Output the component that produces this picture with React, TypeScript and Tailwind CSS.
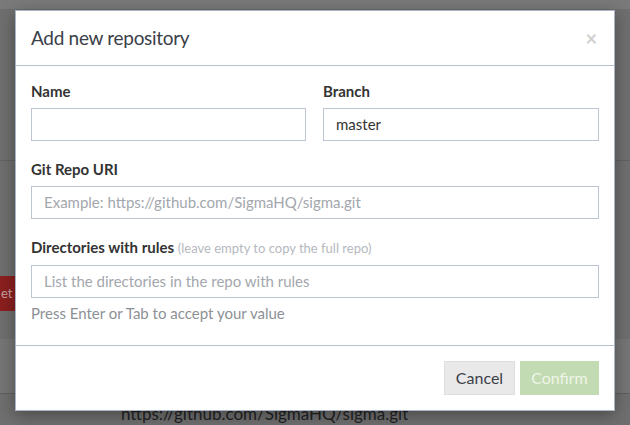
import React from 'react';

const font = { fontFamily: 'Lato, "Noto Sans", sans-serif' };

const Field: React.FC<{ placeholder?: string; value?: string }> = ({ placeholder, value }) => (
    <div className="h-[33px] border border-[#bcc5d1] px-[12px] flex items-center text-[15px]">
        {value ? <span className="text-[#333]">{value}</span> : <span className="text-[#a3a7ad]">{placeholder}</span>}
    </div>
);

const App: React.FC = () => (
    <div className="relative w-[630px] h-[425px] overflow-hidden bg-[#6f6f6f]" style={font}>
        {/* page behind the overlay */}
        <div className="flex flex-col h-full">
            <div className="h-[9px] bg-[#7a7a7a]" />
            <div className="h-[151px]" />
            <div className="h-px bg-[#626262]" />
            <div className="h-[115px]" />
            <div className="h-[35px] w-[15px] bg-[#8b1f1f] text-[#c9a0a0] text-[13px] flex items-center pl-px">et</div>
            <div className="h-[28px]" />
            <div className="h-[54px] bg-[#767676]" />
            <div className="h-px bg-[#5e5e5e]" />
            <div className="flex-1 pl-[121px] pt-[11px] text-[17px] text-[#222] leading-none">https://github.com/SigmaHQ/sigma.git</div>
        </div>

        {/* modal */}
        <div className="absolute left-[15px] top-[10px] w-[600px] bg-white border border-[#a9b4c4] shadow-[0_4px_16px_rgba(0,0,0,0.35)]">
            <div className="h-[55px] px-[15px] flex items-center justify-between border-b border-[#b7c1cd]">
                <h2 className="text-[19px] text-[#3b4048] tracking-[-0.3px]">Add new repository</h2>
                <span className="text-[20px] font-bold text-[#cfcfcf] leading-none mr-[2px]">×</span>
            </div>
            <div className="px-[15px] pt-[16px] pb-[22px] flex flex-col gap-[19px]">
                <div className="grid grid-cols-[275px_276px] gap-[17px]">
                    <div>
                        <label className="block text-[15px] font-bold text-[#333] mb-[7px] leading-[19px]">Name</label>
                        <Field />
                    </div>
                    <div>
                        <label className="block text-[15px] font-bold text-[#333] mb-[7px] leading-[19px]">Branch</label>
                        <Field value="master" />
                    </div>
                </div>
                <div>
                    <label className="block text-[15px] font-bold text-[#333] mb-[7px] leading-[19px]">Git Repo URI</label>
                    <Field placeholder="Example: https://github.com/SigmaHQ/sigma.git" />
                </div>
                <div>
                    <label className="block text-[15px] font-bold text-[#333] mb-[7px] leading-[19px]">
                        Directories with rules <span className="font-normal text-[13px] text-[#b5b9be]">(leave empty to copy the full repo)</span>
                    </label>
                    <Field placeholder="List the directories in the repo with rules" />
                    <p className="text-[15px] text-[#8d9196] mt-[6px] leading-[19px]">Press Enter or Tab to accept your value</p>
                </div>
            </div>
            <div className="border-t border-[#b7c1cd] px-[15px] pt-[15px] pb-[15px] flex justify-end gap-[5px]">
                <button className="h-[34px] w-[71px] bg-[#e9e9e9] border border-[#dedede] text-[#3b4048] text-[16px]">Cancel</button>
                <button className="h-[34px] w-[79px] bg-[#c3dbb2] text-[#eef5e9] text-[16px]">Confirm</button>
            </div>
        </div>
    </div>
);

export default App;
